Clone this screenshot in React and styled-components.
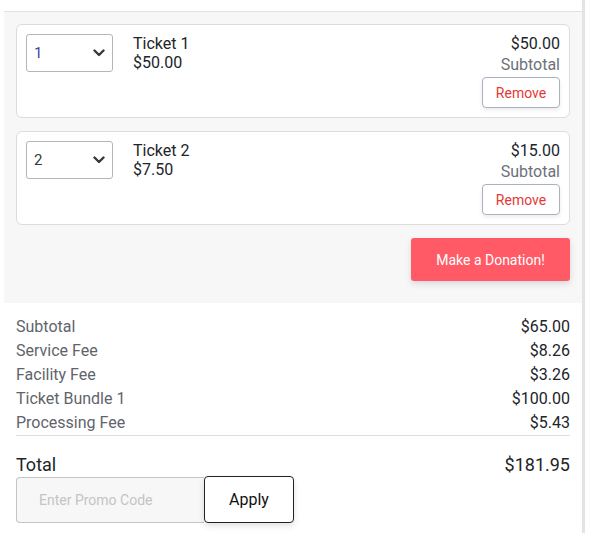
import React from 'react';
import styled, { createGlobalStyle } from 'styled-components';

const GlobalStyle = createGlobalStyle`
    body {
        margin: 0;
        background: #fff;
        font-family: Roboto, 'Liberation Sans', sans-serif;
    }
`;

const tickets = [
    { id: 1, name: 'Ticket 1', price: '$50.00', qty: '1', total: '$50.00', focused: true },
    { id: 2, name: 'Ticket 2', price: '$7.50', qty: '2', total: '$15.00' },
];

const fees = [
    ['Subtotal', '$65.00'],
    ['Service Fee', '$8.26'],
    ['Facility Fee', '$3.26'],
    ['Ticket Bundle 1', '$100.00'],
    ['Processing Fee', '$5.43'],
];

const chevron = encodeURIComponent(
    '<svg xmlns="http://www.w3.org/2000/svg" width="12" height="8" viewBox="0 0 12 8"><path d="M1.5 1.5 6 6l4.5-4.5" fill="none" stroke="#343a40" stroke-width="2.4" stroke-linecap="round" stroke-linejoin="round"/></svg>'
);

const Cart = () => {
    return (
        <Panel>
            <GlobalStyle />
            <Tickets>
                {tickets.map(t => (
                    <Card key={t.id}>
                        <QtySelect defaultValue={t.qty} $focused={t.focused}>
                            {[0, 1, 2, 3, 4, 5].map(n => (
                                <option key={n} value={String(n)}>{n}</option>
                            ))}
                        </QtySelect>
                        <Info>
                            <Name>{t.name}</Name>
                            <Name>{t.price}</Name>
                        </Info>
                        <Side>
                            <Name>{t.total}</Name>
                            <SideLabel>Subtotal</SideLabel>
                            <RemoveBtn>Remove</RemoveBtn>
                        </Side>
                    </Card>
                ))}
                <DonateRow>
                    <DonateBtn>Make a Donation!</DonateBtn>
                </DonateRow>
            </Tickets>
            <Summary>
                <Fees>
                    {fees.map(([label, value]) => (
                        <FeeRow key={label}>
                            <FeeLabel>{label}</FeeLabel>
                            <FeeValue>{value}</FeeValue>
                        </FeeRow>
                    ))}
                </Fees>
                <TotalRow>
                    <span>Total</span>
                    <span>$181.95</span>
                </TotalRow>
                <Promo>
                    <PromoInput placeholder="Enter Promo Code" />
                    <ApplyBtn>Apply</ApplyBtn>
                </Promo>
            </Summary>
        </Panel>
    );
};

export default Cart;

const Panel = styled.div`
    margin-left: 4px;
    width: 581px;
    height: 533px;
    padding-top: 11px;
    box-sizing: border-box;
    border-right: 3px solid #e4e4e4;
    color: #212529;
`;

const Tickets = styled.div`
    background-color: #f7f7f7;
    border-top: 1px solid #e2e2e2;
    padding: 12px 12px 22px;
    display: flex;
    flex-direction: column;
    gap: 13px;
`;

const Card = styled.div`
    background: #fff;
    border: 1px solid #dcdcdc;
    border-radius: 6px;
    padding: 9px;
    display: flex;
    align-items: flex-start;
`;

const QtySelect = styled.select`
    appearance: none;
    width: 87px;
    height: 38px;
    padding: 0 24px 0 7px;
    border: 1px solid #b5b5b5;
    border-radius: 3px;
    background: #fff url("data:image/svg+xml,${chevron}") no-repeat right 7px center;
    font-family: Roboto, 'Liberation Sans', sans-serif;
    font-size: 15px;
    color: ${p => (p.$focused ? '#3c4696' : '#343a40')};
    outline: none;
`;

const Info = styled.div`
    margin-left: 20px;
    flex: 1;
    display: flex;
    flex-direction: column;
`;

const Name = styled.div`
    font-size: 16px;
    line-height: 19px;
    color: #212529;
`;

const Side = styled.div`
    display: flex;
    flex-direction: column;
    align-items: flex-end;
`;

const SideLabel = styled.div`
    margin-top: 1px;
    font-size: 16px;
    line-height: 22px;
    color: #6c717a;
`;

const RemoveBtn = styled.button`
    margin-top: 1px;
    width: 78px;
    height: 31px;
    background: #fff;
    border: 1px solid #a9b1bf;
    border-radius: 4px;
    box-shadow: 0 2px 4px rgba(0, 0, 0, .08);
    color: #e53935;
    font-family: Roboto, 'Liberation Sans', sans-serif;
    font-size: 14px;
    cursor: pointer;
`;

const DonateRow = styled.div`
    display: flex;
    justify-content: flex-end;
`;

const DonateBtn = styled.button`
    width: 159px;
    height: 43px;
    background: #ff5a66;
    border: none;
    border-radius: 3px;
    box-shadow: 0 3px 6px rgba(0, 0, 0, .12);
    color: #fff;
    font-family: Roboto, 'Liberation Sans', sans-serif;
    font-size: 14px;
    cursor: pointer;
`;

const Summary = styled.div`
    padding: 12px 12px 0;
`;

const Fees = styled.div`
    border-bottom: 1px solid #dedede;
`;

const FeeRow = styled.div`
    display: flex;
    justify-content: space-between;
    font-size: 16px;
    line-height: 24px;
`;

const FeeLabel = styled.span`
    color: #5f646b;
`;

const FeeValue = styled.span`
    color: #212529;
`;

const TotalRow = styled.div`
    margin-top: 18px;
    display: flex;
    justify-content: space-between;
    font-size: 18px;
    line-height: 22px;
    color: #212529;
`;

const Promo = styled.div`
    display: flex;
    align-items: stretch;
    margin-top: 1px;
`;

const PromoInput = styled.input`
    width: 188px;
    height: 46px;
    box-sizing: border-box;
    padding: 0 22px;
    border: 1px solid #c4c4c4;
    border-right: none;
    border-radius: 4px 0 0 4px;
    background: #f7f7f7;
    font-family: Roboto, 'Liberation Sans', sans-serif;
    font-size: 14px;
    outline: none;

    &::placeholder {
        color: #c4c4c4;
    }
`;

const ApplyBtn = styled.button`
    width: 90px;
    height: 47px;
    margin-top: -1px;
    background: #fff;
    border: 1px solid #222;
    border-radius: 4px;
    box-shadow: 0 3px 6px rgba(0, 0, 0, .12);
    color: #111;
    font-family: Roboto, 'Liberation Sans', sans-serif;
    font-size: 16px;
    cursor: pointer;
`;
